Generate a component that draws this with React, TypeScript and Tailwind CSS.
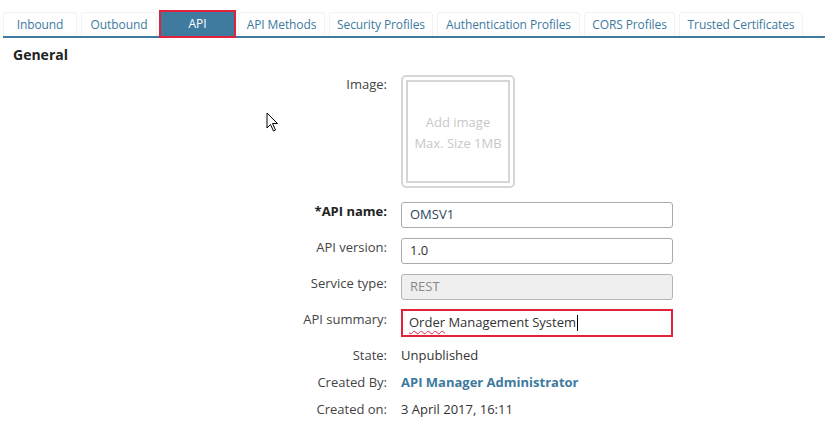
import React from "react";

const tabs = [
  { label: "Inbound", w: 74 },
  { label: "Outbound", w: 76 },
  { label: "API", w: 73, active: true },
  { label: "API Methods", w: 87 },
  { label: "Security Profiles", w: 104 },
  { label: "Authentication Profiles", w: 143 },
  { label: "CORS Profiles", w: 91 },
  { label: "Trusted Certificates", w: 124 },
];

function Label({ children, bold }: { children: React.ReactNode; bold?: boolean }) {
  return (
    <div
      className={`w-[387px] shrink-0 text-right leading-[18px] text-[13px] ${
        bold ? "font-bold text-[#222]" : "text-[#444]"
      }`}
    >
      {children}
    </div>
  );
}

export default function App() {
  return (
    <div
      className="relative w-[825px] h-[446px] bg-white overflow-hidden"
      style={{ fontFamily: '"Open Sans", "Noto Sans", sans-serif' }}
    >
      {/* Tabs */}
      <div className="flex items-end gap-[4px] pt-[12px] border-b-2 border-[#3d7a9e] ml-[3px] w-[822px]">
        {tabs.map((t) =>
          t.active ? (
            <div
              key={t.label}
              className="h-[24px] flex items-center justify-center bg-[#3f7b9f] text-white text-[12px] tracking-[-0.1px] outline-2 outline-[#e0233b]"
              style={{ width: t.w }}
            >
              {t.label}
            </div>
          ) : (
            <div
              key={t.label}
              className="h-[24px] flex items-center justify-center border border-b-0 border-[#f2f2f2] rounded-t-[4px] text-[12px] tracking-[-0.1px] text-[#3d7a9e]"
              style={{ width: t.w }}
            >
              {t.label}
            </div>
          )
        )}
      </div>

      {/* General */}
      <div className="pl-[13px] pt-[7px] text-[14px] font-bold text-[#222] leading-[20px]">General</div>

      {/* Form */}
      <div className="flex flex-col mt-[10px]">
        <div className="flex gap-[14px]">
          <Label>Image:</Label>
          <div className="w-[114px] h-[113px] border-2 border-[#d6d6d6] rounded-[5px] p-[3px]">
            <div className="w-full h-full border-2 border-[#d6d6d6] flex flex-col items-center justify-center pt-[3px] text-[13px] leading-[21px] text-[#c8c8c8]">
              <div>Add image</div>
              <div>Max. Size 1MB</div>
            </div>
          </div>
        </div>

        <div className="flex gap-[14px] mt-[14px]">
          <Label bold>*API name:</Label>
          <div className="w-[272px] h-[26px] border border-[#aaa] rounded-[3px] px-[8px] flex items-center text-[13px] text-[#2a4560]">
            OMSV1
          </div>
        </div>

        <div className="flex gap-[14px] mt-[10px]">
          <Label>API version:</Label>
          <div className="w-[272px] h-[26px] border border-[#aaa] rounded-[3px] px-[8px] flex items-center text-[13px] text-[#333]">
            1.0
          </div>
        </div>

        <div className="flex gap-[14px] mt-[10px]">
          <Label>Service type:</Label>
          <div className="w-[272px] h-[26px] border border-[#b5b5b5] bg-[#efefef] rounded-[3px] px-[8px] flex items-center text-[13px] text-[#888]">
            REST
          </div>
        </div>

        <div className="flex gap-[14px] mt-[10px]">
          <Label>API summary:</Label>
          <div className="w-[272px] h-[28px] -mt-[1px] border-2 border-[#e0233b] px-[6px] flex items-center text-[13px] text-[#333]">
            <span className="underline decoration-wavy decoration-[#e0233b] decoration-1 underline-offset-[3px]">Order</span>
            <span>&nbsp;Management System</span>
            <span className="inline-block w-[1px] h-[16px] bg-black ml-[1px]" />
          </div>
        </div>

        <div className="flex gap-[14px] mt-[9px]">
          <Label>State:</Label>
          <div className="text-[13px] leading-[18px] text-[#333]">Unpublished</div>
        </div>

        <div className="flex gap-[14px] mt-[9px]">
          <Label>Created By:</Label>
          <div className="text-[13px] leading-[18px] font-bold text-[#3d7a9e]">API Manager Administrator</div>
        </div>

        <div className="flex gap-[14px] mt-[9px]">
          <Label>Created on:</Label>
          <div className="text-[13px] leading-[18px] text-[#333]">3 April 2017, 16:11</div>
        </div>
      </div>

      {/* Mouse cursor */}
      <svg
        className="absolute left-[266px] top-[112px]"
        width="14"
        height="21"
        viewBox="0 0 14 21"
      >
        <path
          d="M1 1 L1 16 L4.5 12.5 L7.5 19 L9.5 18 L6.5 11.5 L11.5 11.5 Z"
          fill="white"
          stroke="black"
          strokeWidth="1"
          strokeLinejoin="miter"
        />
      </svg>
    </div>
  );
}
